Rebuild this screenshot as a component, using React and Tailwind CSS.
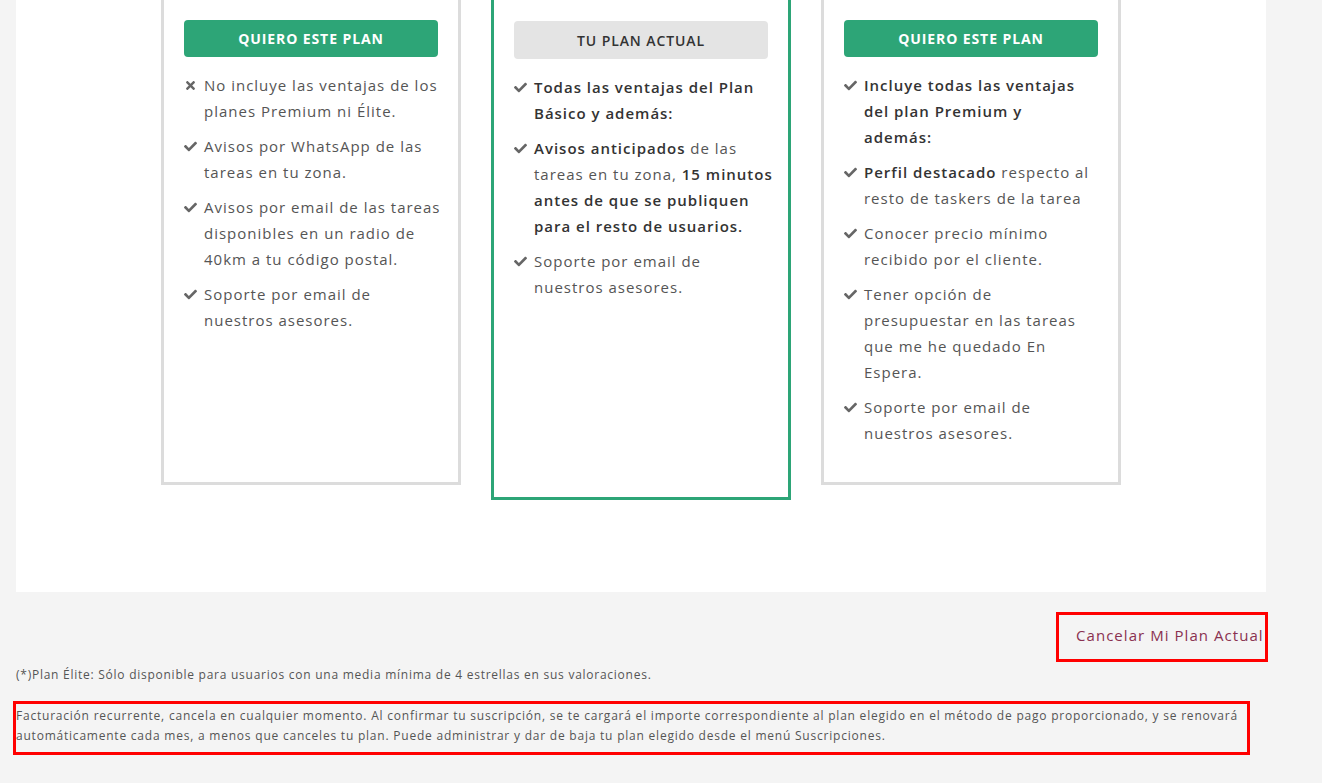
import React from 'react'
import { FaCheck, FaTimes } from 'react-icons/fa'

const font = { fontFamily: '"Open Sans", "Liberation Sans", sans-serif' }

// lines are broken by hand so the wrap matches the original layout
const Item = ({ icon, lines }) => (
  <li className="flex gap-[6px] mb-[9px] text-[15px] leading-[26px] text-[#555]">
    <span className="w-[14px] shrink-0 pt-[7px] text-[#666]">
      {icon == 'x' ? <FaTimes size={13} /> : <FaCheck size={13} />}
    </span>
    <span className="whitespace-nowrap">
      {lines.map((l, i) => (
        <React.Fragment key={i}>
          {l}
          {i < lines.length - 1 && <br />}
        </React.Fragment>
      ))}
    </span>
  </li>
)

const B = ({ children }) => <b className="font-semibold text-[#333]">{children}</b>

const GreenBtn = () => (
  <button className="w-full h-[37px] rounded bg-[#2da577] text-white text-[14px] font-bold uppercase tracking-[0.065em]">Quiero este plan</button>
)

const App = () => {
  return (
    <div className="min-h-screen bg-[#f4f4f4]" style={font}>
      <div className="ml-4 w-[1250px] h-[592px] bg-white flex justify-center items-start gap-[30px] tracking-[0.062em]">
        {/* basico */}
        <div className="w-[300px] h-[485px] border-[3px] border-t-0 border-[#dcdcdc] px-5 pt-5">
          <GreenBtn />
          <ul className="mt-[15px]">
            <Item icon="x" lines={['No incluye las ventajas de los', 'planes Premium ni Élite.']} />
            <Item lines={['Avisos por WhatsApp de las', 'tareas en tu zona.']} />
            <Item lines={['Avisos por email de las tareas', 'disponibles en un radio de', '40km a tu código postal.']} />
            <Item lines={['Soporte por email de', 'nuestros asesores.']} />
          </ul>
        </div>
        {/* premium - plan actual */}
        <div className="w-[300px] h-[500px] border-[3px] border-t-0 border-[#2da577] px-5 pt-[21px]">
          <button className="w-full h-[38px] rounded bg-[#e4e4e4] text-[#333] text-[14px] font-semibold uppercase tracking-[0.065em]">Tu plan actual</button>
          <ul className="mt-[15px]">
            <Item lines={[<B>Todas las ventajas del Plan</B>, <B>Básico y además:</B>]} />
            <Item
              lines={[
                <><B>Avisos anticipados</B> de las</>,
                <>tareas en tu zona, <B>15 minutos</B></>,
                <B>antes de que se publiquen</B>,
                <B>para el resto de usuarios.</B>,
              ]}
            />
            <Item lines={['Soporte por email de', 'nuestros asesores.']} />
          </ul>
        </div>
        {/* elite */}
        <div className="w-[300px] h-[485px] border-[3px] border-t-0 border-[#dcdcdc] px-5 pt-5">
          <GreenBtn />
          <ul className="mt-[15px]">
            <Item lines={[<B>Incluye todas las ventajas</B>, <B>del plan Premium y</B>, <B>además:</B>]} />
            <Item lines={[<><B>Perfil destacado</B> respecto al</>, 'resto de taskers de la tarea']} />
            <Item lines={['Conocer precio mínimo', 'recibido por el cliente.']} />
            <Item lines={['Tener opción de', 'presupuestar en las tareas', 'que me he quedado En', 'Espera.']} />
            <Item lines={['Soporte por email de', 'nuestros asesores.']} />
          </ul>
        </div>
      </div>

      <div className="w-[1268px] flex justify-end mt-5">
        <div className="w-[212px] h-[50px] border-[3px] border-[#ff0000] flex items-center pl-[17px] pb-[4px]">
          <a className="text-[15px] text-[#8a3150] whitespace-nowrap cursor-pointer tracking-[0.07em]">Cancelar Mi Plan Actual</a>
        </div>
      </div>

      <p className="ml-4 mt-[3px] text-[12px] leading-[20px] text-[#555] tracking-[0.062em]">(*)Plan Élite: Sólo disponible para usuarios con una media mínima de 4 estrellas en sus valoraciones.</p>

      <div className="ml-[13px] mt-[16px] w-[1237px] h-[54px] border-[3px] border-[#ff0000] text-[12px] leading-[20px] text-[#555] pt-[2px] tracking-[0.065em] whitespace-nowrap">
        Facturación recurrente, cancela en cualquier momento. Al confirmar tu suscripción, se te cargará el importe correspondiente al plan elegido en el método de pago proporcionado, y se renovará
        <br />
        automáticamente cada mes, a menos que canceles tu plan. Puede administrar y dar de baja tu plan elegido desde el menú Suscripciones.
      </div>
    </div>
  )
}

export default App
